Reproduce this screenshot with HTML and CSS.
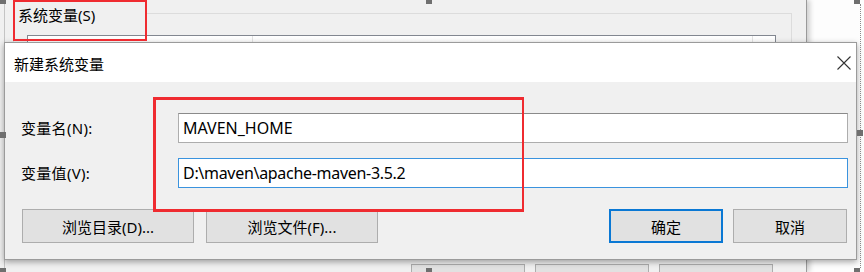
FILE: index.html
```html
<!DOCTYPE html>
<html lang="zh-CN">
<head>
  <meta charset="UTF-8" />
  <title>新建系统变量</title>
  <link rel="stylesheet" href="styles.css">
</head>
<body>
  <div class="screen">
    <div class="back-window">
      <div class="group">
        <span class="group-label">系统变量(S)</span>
        <div class="list">
          <div class="list-head">
            <span class="col col-name"></span>
            <span class="col col-value"></span>
          </div>
        </div>
      </div>
      <div class="back-buttons">
        <span class="back-btn"></span>
        <span class="back-btn"></span>
        <span class="back-btn"></span>
      </div>
    </div>

    <div class="dialog">
      <div class="titlebar">
        <span class="title">新建系统变量</span>
        <svg class="close" width="14" height="14" viewBox="0 0 14 14">
          <path d="M0.5 0.5 L13.5 13.5 M13.5 0.5 L0.5 13.5" stroke="#333" stroke-width="1.1" fill="none" />
        </svg>
      </div>
      <div class="dialog-body">
        <div class="fields">
          <label class="field-label" for="varName">变量名(N):</label>
          <input class="field" id="varName" type="text" value="MAVEN_HOME" readonly />
          <label class="field-label" for="varValue">变量值(V):</label>
          <input class="field focused" id="varValue" type="text" value="D:\maven\apache-maven-3.5.2" readonly />
        </div>
        <div class="actions">
          <div class="btn-group">
            <button class="btn btn-wide">浏览目录(D)...</button>
            <button class="btn btn-wide">浏览文件(F)...</button>
          </div>
          <div class="btn-group right">
            <button class="btn btn-default">确定</button>
            <button class="btn">取消</button>
          </div>
        </div>
      </div>
    </div>

    <!-- red annotation boxes -->
    <div class="mark mark-label"></div>
    <div class="mark mark-fields"></div>

    <!-- selection frame of the screenshot tool -->
    <div class="sel-edge"></div>
    <span class="handle h-tl"></span>
    <span class="handle h-tm"></span>
    <span class="handle h-tr"></span>
    <span class="handle h-ml"></span>
    <span class="handle h-mr"></span>
    <span class="handle h-bl"></span>
    <span class="handle h-bm"></span>
    <span class="handle h-br"></span>
  </div>
</body>
</html>
```

FILE: styles.css
```css
body {
  margin: 0;
  background-color: #ffffff;
  font-family: "Noto Sans", "Noto Sans CJK SC", sans-serif;
  color: #000000;
}
.screen {
  position: relative;
  width: 864px;
  height: 272px;
  overflow: hidden;
  background-color: #fdfdfd;
}

/* window behind the dialog */
.back-window {
  position: absolute;
  left: 0;
  top: 0;
  width: 807px;
  height: 272px;
  box-sizing: border-box;
  padding-left: 13px;
  background: linear-gradient(to right, #f0f0f0 4px, #c4c4c4 4px, #c4c4c4 5px, #f0f0f0 5px);
  border-right: 1px solid #9a9a9a;
  box-shadow: 3px 0 5px rgba(0, 0, 0, 0.18);
}
.group {
  margin-top: 13px;
  width: 779px;
  height: 237px;
  box-sizing: border-box;
  padding-left: 13px;
  border: 1px solid #dcdcdc;
  border-bottom: none;
}
.group-label {
  display: block;
  width: 133px;
  height: 20px;
  margin: -9px 0 0 -13px;
  padding-left: 4px;
  box-sizing: border-box;
  line-height: 20px;
  font-size: 15px;
  background-color: #f0f0f0;
}
.list {
  margin-top: 10px;
  width: 749px;
  height: 120px;
  box-sizing: border-box;
  border: 1px solid #828790;
  background-color: #ffffff;
}
.list-head {
  display: flex;
  height: 26px;
  background: linear-gradient(#ffffff, #f4f4f4);
  border-bottom: 1px solid #e5e5e5;
}
.col {
  border-right: 1px solid #e3e3e3;
  box-sizing: border-box;
}
.col-name {
  width: 225px;
}
.col-value {
  width: 500px;
}
.back-buttons {
  display: flex;
  gap: 10px;
  margin-top: 14px;
  padding-left: 398px;
}
.back-btn {
  width: 114px;
  height: 30px;
  box-sizing: border-box;
  border: 1px solid #adadad;
  background-color: #e1e1e1;
}

/* the dialog */
.dialog {
  position: absolute;
  left: 4px;
  top: 42px;
  width: 853px;
  height: 218px;
  box-sizing: border-box;
  border: 1px solid #9b9b9b;
  background-color: #f0f0f0;
  box-shadow: 0 2px 6px rgba(0, 0, 0, 0.35);
}
.titlebar {
  display: flex;
  align-items: center;
  justify-content: space-between;
  height: 39px;
  padding: 0 5px 0 9px;
  background-color: #ffffff;
}
.title {
  font-size: 15px;
  line-height: 20px;
  padding-top: 2px;
}
.close {
  display: block;
  margin-top: 1px;
}
.dialog-body {
  padding: 31px 8px 0 16px;
}
.fields {
  display: grid;
  grid-template-columns: 157px 1fr;
  grid-auto-rows: 30px;
  row-gap: 15px;
  align-items: center;
}
.field-label {
  font-size: 15px;
  line-height: 20px;
  letter-spacing: 0.3px;
}
.field {
  height: 30px;
  margin: 0;
  padding: 0 4px;
  box-sizing: border-box;
  border: 1px solid #adadad;
  border-top-color: #8a8a8a;
  background-color: #ffffff;
  color: #000000;
  font-family: "Noto Sans", "Noto Sans CJK SC", sans-serif;
  font-size: 16px;
  outline: none;
}
.field.focused {
  border-color: #3a93de;
  letter-spacing: -0.3px;
}
.actions {
  display: flex;
  justify-content: space-between;
  margin-top: 21px;
  padding: 0 1px;
}
.btn-group {
  display: flex;
  gap: 12px;
}
.btn-group.right {
  gap: 10px;
}
.btn {
  width: 114px;
  height: 34px;
  margin: 0;
  padding: 0;
  box-sizing: border-box;
  border: 1px solid #adadad;
  border-radius: 0;
  background-color: #e1e1e1;
  color: #000000;
  font-family: "Noto Sans", "Noto Sans CJK SC", sans-serif;
  font-size: 15px;
}
.btn-wide {
  width: 172px;
}
.btn-default {
  border: 2px solid #0a78d4;
}

/* red annotation boxes */
.mark {
  position: absolute;
  box-sizing: border-box;
  border: 2px solid #ef2b30;
}
.mark-label {
  left: 13px;
  top: 0;
  width: 134px;
  height: 41px;
}
.mark-fields {
  left: 153px;
  top: 97px;
  width: 371px;
  height: 115px;
  border-width: 3px 2px 3px 3px;
}

/* selection frame */
.sel-edge {
  position: absolute;
  left: 860px;
  top: 4px;
  height: 264px;
  border-left: 1px dotted #8a8a8a;
}
.handle {
  position: absolute;
  width: 6px;
  height: 5px;
  background-color: #6f6f6f;
}
.h-tl { left: 0; top: -1px; }
.h-tm { left: 426px; top: -1px; }
.h-tr { left: 854px; top: -1px; }
.h-ml { left: 0; top: 132px; height: 6px; }
.h-mr { left: 857px; top: 130px; height: 6px; }
.h-bl { left: 0; top: 268px; }
.h-bm { left: 426px; top: 268px; }
.h-br { left: 854px; top: 268px; }
```
